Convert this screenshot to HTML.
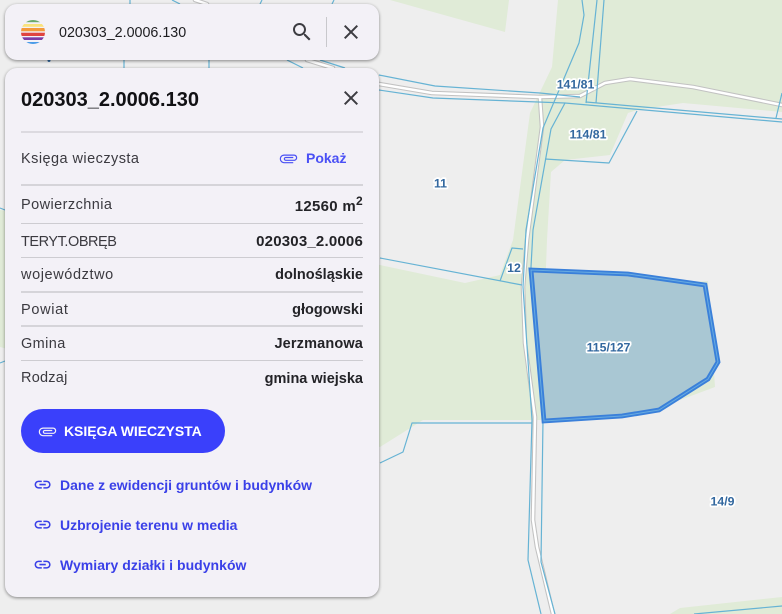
<!DOCTYPE html>
<html lang="pl">
<head>
<meta charset="utf-8">
<title>020303_2.0006.130</title>
<style>
html,body{margin:0;padding:0;width:782px;height:614px;overflow:hidden;background:#eeeeee}
body{position:relative;font-family:"Liberation Sans",sans-serif}
#map{position:absolute;left:0;top:0}
#map text{font:bold 12.3px "Liberation Sans",sans-serif;fill:#33689f;stroke:#fff;stroke-width:3.4px;paint-order:stroke;stroke-linejoin:round;text-anchor:middle}
.card{position:absolute;left:5px;width:374px;background:#f3f1f7;box-shadow:0 1px 3px rgba(0,0,0,.45)}
#search{top:4px;height:56px;border-radius:12px}
#detail{top:68px;height:529px;border-radius:12px}
.t{position:absolute;white-space:nowrap;line-height:20px;height:20px}
.l{left:21px;font-size:14.5px;color:#3b3a40}
.v{right:419px;font-size:14.5px;font-weight:bold;color:#232327}
.a{left:60px;font-size:14px;font-weight:bold;color:#3a40e8}
.hr{position:absolute;left:21px;width:342px;background:#cdccd1}
svg.i{position:absolute;overflow:visible}
</style>
</head>
<body>
<svg id="map" width="782" height="614" viewBox="0 0 782 614" fill="none">
  <g fill="#e0ebd7">
    <polygon points="390,0 509,0 505,32"/>
    <polygon points="558,0 782,0 782,112 683,103 637,110 628,113 610,155 565,160 551,172 547,240 546,267 545,420 423,420 380,447 0,347 0,210 380,265 465,283 500,275 513,240 530,113 552,67"/>
    <polygon points="690,282 708,281 715,387 680,400"/>
    <polygon points="670,614 680,608 782,597 782,614"/>
  </g>

  <g stroke-linejoin="round" stroke-linecap="round">
    <g stroke="#c2c2c2" stroke-width="4.6">
      <polyline points="195,0 207,4"/>
      <polyline points="307,60 333,68"/>
      <polyline points="379,84 432,93 540,97 580,96 605,83 630,79 693,87 782,105"/>
      <polyline points="540,98 542,127 527,240 523,287 525,343 535,417 533,520 537,547 553,614"/>
    </g>
    <g stroke="#ffffff" stroke-width="2.5">
      <polyline points="195,0 207,4"/>
      <polyline points="307,60 333,68"/>
      <polyline points="379,84 432,93 540,97 580,96 605,83 630,79 693,87 782,105"/>
      <polyline points="540,98 542,127 527,240 523,287 525,343 535,417 533,520 537,547 553,614"/>
    </g>
  </g>

  <g stroke="#66b3d4" stroke-width="1.2" stroke-linejoin="round">
    <polyline points="130,0 130,4"/><polyline points="172,0 180,4"/>
    <polyline points="262,0 260,4"/><polyline points="334,0 332,4"/>
    <polyline points="124,60 124,68"/><polyline points="209,60 209,68"/>
    <polyline points="287,60 303,68"/><polyline points="320,60 345,68"/>
    <polyline points="0,208 5,210"/><polyline points="0,363 5,361"/>
    <polyline points="379,75 435,86 540,93 580,97"/>
    <polyline points="379,90 433,98 565,103 782,122"/>
    <polyline points="586,102 782,119"/>
    <polyline points="582,0 584,15 579,43 543,128 526,230 523,287 532,420 528,560 541,614"/>
    <polyline points="565,103 551,129 533,230 531,267 543,420 541,562 555,614"/>
    <polyline points="597,0 586,103"/><polyline points="604,0 596,103"/>
    <polyline points="637,111 609,163 545,159"/>
    <polyline points="782,93 776,118"/>
    <polyline points="380,258 522,285"/>
    <polyline points="500,281 512,248 523,249"/>
    <polyline points="532,423 412,423 403,452 380,463"/>
    <polyline points="694,614 782,606"/>
  </g>
  <circle cx="49" cy="60.5" r="1.5" fill="#33689f"/>

  <polygon points="531,270 628,274 705,285 718,362 708,379 659,410 622,416 544,421" fill="#a9c7d3" stroke="#3a80da" stroke-width="4.8" stroke-linejoin="miter"/>
  <polygon points="531,270 628,274 705,285 718,362 708,379 659,410 622,416 544,421" fill="none" stroke="#68abe0" stroke-width="1"/>

  <text x="575.500" y="88.500">141/81</text>
  <text x="588" y="138.500">114/81</text>
  <text x="440.500" y="187.500">11</text>
  <text x="514" y="272">12</text>
  <text x="608.500" y="351.500">115/127</text>
  <text x="722.500" y="505.500">14/9</text>
</svg>

<div class="card" id="search"></div>
<div class="card" id="detail"></div>

<svg class="i" style="left:21px;top:20px" width="24" height="24" viewBox="0 0 24 24">
  <defs><clipPath id="c"><circle cx="12" cy="12" r="12"/></clipPath></defs>
  <g clip-path="url(#c)">
    <rect y="0" width="24" height="2.200" fill="#6aa96a"/>
    <rect y="4" width="24" height="2.800" fill="#f9e27d"/>
    <rect y="8" width="24" height="3.300" fill="#f39a3c"/>
    <rect y="12.700" width="24" height="3.300" fill="#e0433f"/>
    <rect y="17.300" width="24" height="2.700" fill="#7c3ca5"/>
    <rect y="22" width="24" height="2" fill="#4a9be8"/>
  </g>
</svg>
<div class="t" style="left:59px;top:22px;font-size:14.3px;color:#1d1d20;margin-top:.5px">020303_2.0006.130</div>
<svg class="i" style="left:290px;top:20px" width="24" height="24" viewBox="0 0 24 24"><path fill="#3c3c41" d="M15.500 14h-.790l-.280-.270C15.410 12.590 16 11.110 16 9.500 16 5.910 13.090 3 9.500 3S3 5.910 3 9.500 5.910 16 9.500 16c1.610 0 3.090-.590 4.230-1.570l.270.280v.790l5 4.990L20.490 19l-4.990-5zm-6 0C7.010 14 5 11.990 5 9.500S7.010 5 9.500 5 14 7.010 14 9.500 11.990 14 9.500 14z"/></svg>
<div style="position:absolute;left:326px;top:17px;width:1px;height:30px;background:#c8c8cc"></div>
<svg class="i" style="left:339px;top:20px" width="24" height="24" viewBox="0 0 24 24"><path fill="#3c3c41" d="M19 6.410L17.590 5 12 10.590 6.410 5 5 6.410 10.590 12 5 17.590 6.410 19 12 13.410 17.590 19 19 17.590 13.410 12z"/></svg>

<div class="t" style="left:21px;top:90px;font-size:20px;font-weight:bold;color:#111114">020303_2.0006.130</div>
<svg class="i" style="left:339px;top:86px" width="24" height="24" viewBox="0 0 24 24"><path fill="#3c3c41" d="M19 6.410L17.590 5 12 10.590 6.410 5 5 6.410 10.590 12 5 17.590 6.410 19 12 13.410 17.590 19 19 17.590 13.410 12z"/></svg>
<div class="hr" style="top:131px;height:2px;background:#dcdae0"></div>

<div class="t l" style="top:149px;letter-spacing:.45px">Księga wieczysta</div>
<svg class="i" style="left:278.500px;top:148.500px" width="19" height="19" viewBox="0 0 24 24"><path transform="rotate(90 12 12)" fill="#4a50f5" d="M16.500 6v11.500c0 2.210-1.790 4-4 4s-4-1.790-4-4V5c0-1.380 1.120-2.500 2.500-2.500s2.500 1.120 2.500 2.500v10.500c0 .550-.450 1-1 1s-1-.450-1-1V6H10v9.500c0 1.380 1.120 2.500 2.500 2.500s2.500-1.120 2.500-2.500V5c0-2.210-1.790-4-4-4S7 2.790 7 5v12.500c0 3.040 2.460 5.500 5.500 5.500s5.500-2.460 5.500-5.500V6h-1.500z"/></svg>
<div class="t" style="left:306px;top:148px;font-size:14px;font-weight:bold;color:#4a50f5">Pokaż</div>
<div class="hr" style="top:184px;height:2px;background:#d5d4d9"></div>

<div class="t l" style="top:195px;letter-spacing:.43px">Powierzchnia</div>
<div class="t v" style="top:197px;font-size:15px;letter-spacing:.3px">12560 m<sup style="font-size:12px;line-height:0">2</sup></div>
<div class="hr" style="top:223px;height:1px"></div>
<div class="t l" style="top:232px;letter-spacing:-.45px">TERYT.OBRĘB</div>
<div class="t v" style="top:232px;font-size:15px;letter-spacing:.2px">020303_2.0006</div>
<div class="hr" style="top:257px;height:1px"></div>
<div class="t l" style="top:265px;letter-spacing:.6px">województwo</div>
<div class="t v" style="top:265px">dolnośląskie</div>
<div class="hr" style="top:291px;height:2px;background:#d5d4d9"></div>
<div class="t l" style="top:300px;letter-spacing:.67px">Powiat</div>
<div class="t v" style="top:300px">głogowski</div>
<div class="hr" style="top:325px;height:2px;background:#d5d4d9"></div>
<div class="t l" style="top:334px;letter-spacing:.4px">Gmina</div>
<div class="t v" style="top:334px;letter-spacing:.15px">Jerzmanowa</div>
<div class="hr" style="top:360px;height:1px"></div>
<div class="t l" style="top:368px;letter-spacing:.23px">Rodzaj</div>
<div class="t v" style="top:369px">gmina wiejska</div>

<div style="position:absolute;left:21px;top:409px;width:204px;height:44px;border-radius:22px;background:#3a40fb"></div>
<svg class="i" style="left:37.500px;top:421.500px" width="19" height="19" viewBox="0 0 24 24"><path transform="rotate(90 12 12)" fill="#f3f1f7" d="M16.500 6v11.500c0 2.210-1.790 4-4 4s-4-1.790-4-4V5c0-1.380 1.120-2.500 2.500-2.500s2.500 1.120 2.500 2.500v10.500c0 .550-.450 1-1 1s-1-.450-1-1V6H10v9.500c0 1.380 1.120 2.500 2.500 2.500s2.500-1.120 2.500-2.500V5c0-2.210-1.790-4-4-4S7 2.790 7 5v12.500c0 3.040 2.460 5.500 5.500 5.500s5.500-2.460 5.500-5.500V6h-1.500z"/></svg>
<div class="t" style="left:64px;top:421px;font-size:14px;font-weight:bold;color:#fff;letter-spacing:-.05px">KSIĘGA WIECZYSTA</div>

<svg class="i" style="left:33.400px;top:475.400px" width="19.200" height="19.200" viewBox="0 0 24 24"><path fill="#3a40e8" d="M3.900 12c0-1.710 1.390-3.100 3.100-3.100h4V7H7c-2.760 0-5 2.240-5 5s2.240 5 5 5h4v-1.900H7c-1.710 0-3.100-1.390-3.100-3.100zM8 13h8v-2H8v2zm9-6h-4v1.900h4c1.710 0 3.100 1.390 3.100 3.100s-1.390 3.100-3.100 3.100h-4V17h4c2.760 0 5-2.240 5-5s-2.240-5-5-5z"/></svg>
<div class="t a" style="top:475px">Dane z ewidencji gruntów i budynków</div>
<svg class="i" style="left:33.400px;top:515.400px" width="19.200" height="19.200" viewBox="0 0 24 24"><path fill="#3a40e8" d="M3.900 12c0-1.710 1.390-3.100 3.100-3.100h4V7H7c-2.760 0-5 2.240-5 5s2.240 5 5 5h4v-1.900H7c-1.710 0-3.100-1.390-3.100-3.100zM8 13h8v-2H8v2zm9-6h-4v1.900h4c1.710 0 3.100 1.390 3.100 3.100s-1.390 3.100-3.100 3.100h-4V17h4c2.760 0 5-2.240 5-5s-2.240-5-5-5z"/></svg>
<div class="t a" style="top:515px;letter-spacing:0">Uzbrojenie terenu w media</div>
<svg class="i" style="left:33.400px;top:555.400px" width="19.200" height="19.200" viewBox="0 0 24 24"><path fill="#3a40e8" d="M3.900 12c0-1.710 1.390-3.100 3.100-3.100h4V7H7c-2.760 0-5 2.240-5 5s2.240 5 5 5h4v-1.900H7c-1.710 0-3.100-1.390-3.100-3.100zM8 13h8v-2H8v2zm9-6h-4v1.900h4c1.710 0 3.100 1.390 3.100 3.100s-1.390 3.100-3.100 3.100h-4V17h4c2.760 0 5-2.240 5-5s-2.240-5-5-5z"/></svg>
<div class="t a" style="top:555px;letter-spacing:.03px">Wymiary działki i budynków</div>
</body>
</html>
